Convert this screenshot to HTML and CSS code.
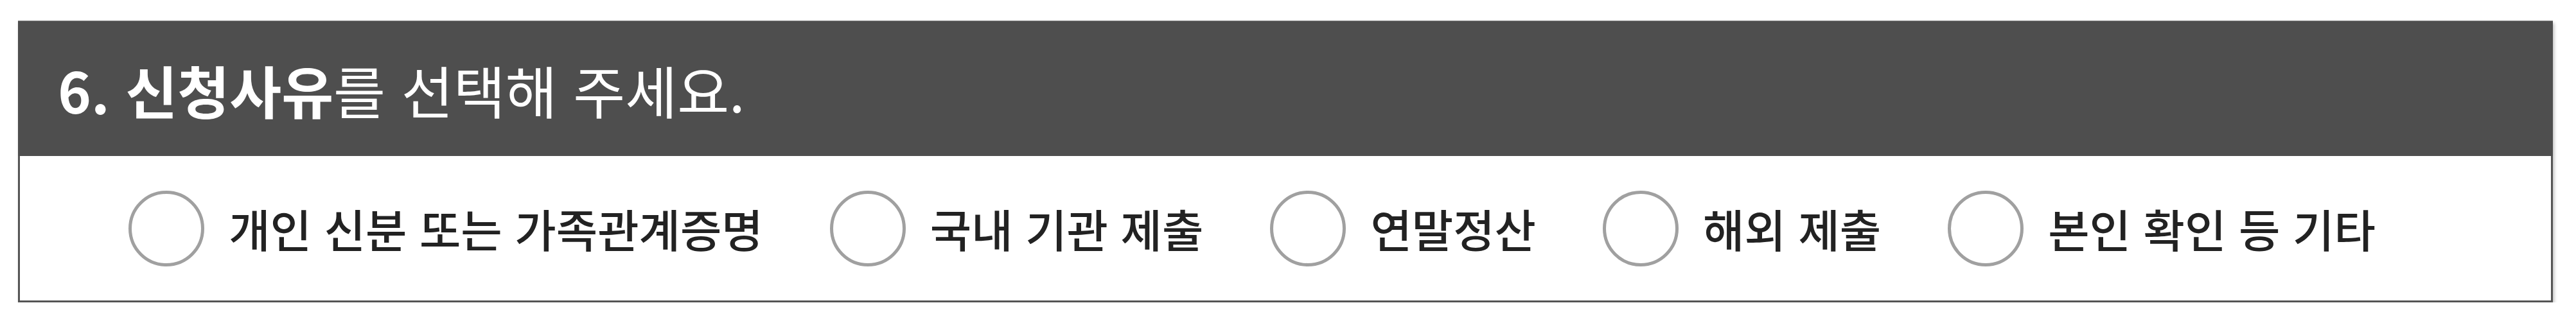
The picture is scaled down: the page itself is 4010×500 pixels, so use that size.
FILE: index.html
```html
<!doctype html>
<html lang="ko">
    <head>
        <meta charset="UTF-8" />
        <meta name="viewport" content="width=device-width, initial-scale=1.0" />
        <title>신청사유 선택</title>
        <link rel="stylesheet" href="styles.css">
    </head>
    <body>
        <div class="section">
            <!-- Question header -->
            <h3 class="section-title"><strong>6. 신청사유</strong>를 선택해 주세요.</h3>

            <!-- Reason options -->
            <div class="options">
                <label class="option">
                    <input type="radio" name="reason" value="personal" />
                    <span>개인 신분 또는 가족관계증명</span>
                </label>
                <label class="option">
                    <input type="radio" name="reason" value="domestic" />
                    <span>국내 기관 제출</span>
                </label>
                <label class="option">
                    <input type="radio" name="reason" value="tax" />
                    <span>연말정산</span>
                </label>
                <label class="option">
                    <input type="radio" name="reason" value="overseas" />
                    <span>해외 제출</span>
                </label>
                <label class="option">
                    <input type="radio" name="reason" value="etc" />
                    <span>본인 확인 등 기타</span>
                </label>
            </div>
        </div>
    </body>
</html>
```

FILE: styles.css
```css
/* Basic styling */
body {
    font-family: "Noto Sans CJK KR", "Noto Sans", sans-serif;
    background-color: #fff;
    margin: 0;
    padding: 32px 36px 0 28px;
}
.section {
    border: 3px solid #555;
    border-top: none;
    box-shadow: 2px 4px 5px rgba(0, 0, 0, 0.25);
}
.section-title {
    display: flex;
    align-items: center;
    height: 211px;
    margin: 0 -3px;
    padding: 0 0 0 62px;
    background-color: #4e4e4e;
    border-top: 1px solid #888;
    box-sizing: border-box;
    color: #fff;
    font-size: 88px;
    font-weight: normal;
    white-space: pre;
}
.section-title strong {
    font-weight: bold;
}
.options {
    display: flex;
    justify-content: center;
    align-items: center;
    height: 225px;
}
.option {
    display: flex;
    align-items: center;
    margin-right: 104px;
    color: #222;
    font-size: 70px;
    font-weight: 500;
    cursor: pointer;
}
.option input {
    appearance: none;
    width: 118px;
    height: 118px;
    margin: 0 38px 0 0;
    border: 5px solid #a0a0a0;
    border-radius: 50%;
    background-color: #fff;
    box-sizing: border-box;
}
```
